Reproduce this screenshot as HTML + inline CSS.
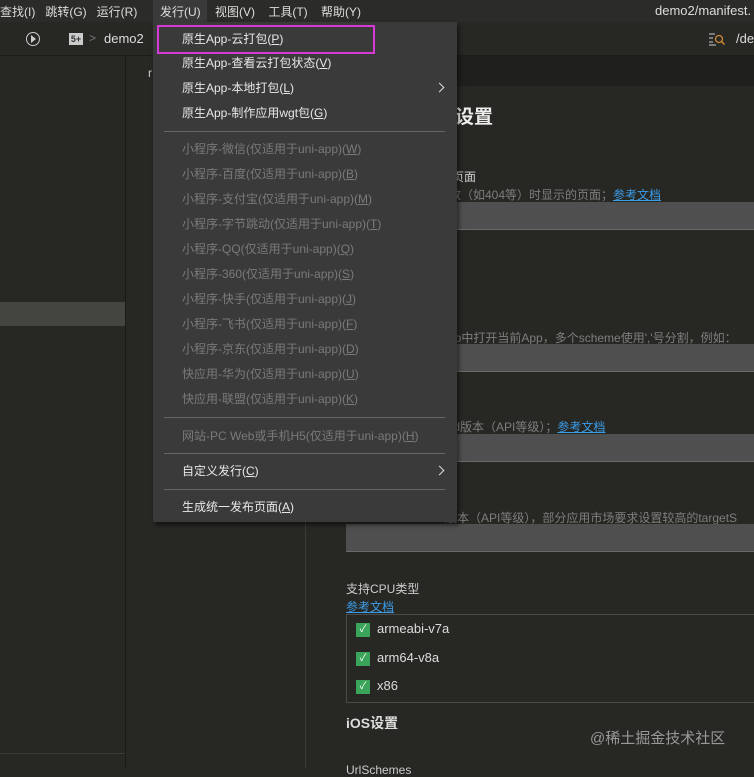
<!DOCTYPE html>
<html><head><meta charset="utf-8"><style>
*{margin:0;padding:0;box-sizing:border-box}
body{width:754px;height:768px;overflow:hidden;background:#272723;font-family:"Liberation Sans","Noto Sans CJK SC",sans-serif;color:#ddd;position:relative;font-size:12px}
.a{position:absolute;white-space:nowrap}
.menu{position:absolute;left:153px;top:22px;width:304px;height:500px;background:#3a3a3a;box-shadow:2px 3px 4px rgba(0,0,0,.5)}
.it{position:absolute;left:29px;font-size:12px;color:#e8e8e8;line-height:14px}
.dis{color:#7a7a7a}
.sep{position:absolute;left:11px;width:281px;height:1px;background:#666}
.inp{position:absolute;left:346px;width:420px;height:28px;background:#4f4f4f;border-bottom:1px solid #6a6a6a}
.gray{color:#7e7e7e}
.lnk{color:#3b9ce8;text-decoration:underline}
.cb{position:absolute;left:356px;width:14px;height:14px;background:#3aa55a;color:#fff;font-size:10px;line-height:14px;text-align:center}
.chev{position:absolute;left:283px;width:7px;height:7px;border-top:1.5px solid #ddd;border-right:1.5px solid #ddd;transform:rotate(45deg)}
</style></head><body>
<div class="a" style="left:0;top:0;width:754px;height:22px;background:#2b2b29"></div>
<div class="a" style="left:0;top:3px;font-size:12px;color:#ddd">查找(I)&nbsp;&nbsp;&nbsp;跳转(G)&nbsp;&nbsp;&nbsp;运行(R)</div>
<div class="a" style="left:153px;top:0;width:54px;height:22px;background:#3a3a3a"></div>
<div class="a" style="left:160px;top:3px;color:#ddd">发行(U)</div>
<div class="a" style="left:215px;top:3px;color:#ddd">视图(V)&nbsp;&nbsp;&nbsp;&nbsp;工具(T)&nbsp;&nbsp;&nbsp;&nbsp;帮助(Y)</div>
<div class="a" style="left:655px;top:3px;font-size:13px;color:#ddd">demo2/manifest.</div>
<div class="a" style="left:0;top:22px;width:754px;height:34px;background:#272723;border-bottom:1px solid #1c1c1a"></div>
<div class="a" style="left:26px;top:32px;width:14px;height:14px;border:1.3px solid #ccc;border-radius:50%"></div>
<div class="a" style="left:31px;top:35px;width:0;height:0;border-left:5px solid #ccc;border-top:4px solid transparent;border-bottom:4px solid transparent"></div>
<div class="a" style="left:69px;top:33px;width:14px;height:12px;background:#ccc;color:#333;font-size:9px;font-weight:bold;line-height:12px;text-align:center">5+</div>
<div class="a" style="left:89px;top:31px;color:#777">&gt;</div>
<div class="a" style="left:104px;top:31px;font-size:13px;color:#ddd">demo2</div>
<svg class="a" style="left:709px;top:32px" width="18" height="14" viewBox="0 0 18 14"><g stroke="#ccc" stroke-width="1"><line x1="0" y1="2" x2="6" y2="2"/><line x1="0" y1="6" x2="4" y2="6"/><line x1="0" y1="10" x2="4" y2="10"/><line x1="0" y1="13" x2="7" y2="13"/></g><circle cx="10" cy="7" r="3.5" fill="none" stroke="#d08a3a" stroke-width="1.3"/><line x1="12.5" y1="9.5" x2="15.5" y2="12.5" stroke="#d08a3a" stroke-width="1.5"/></svg>
<div class="a" style="left:736px;top:31px;font-size:13px;color:#ddd">/de</div>
<div class="a" style="left:457px;top:56px;width:297px;height:30px;background:#1f1f1d"></div>
<div class="a" style="left:125px;top:56px;width:1px;height:712px;background:#1a1a18"></div>
<div class="a" style="left:0;top:302px;width:125px;height:24px;background:#45453f"></div>
<div class="a" style="left:0;top:753px;width:125px;height:1px;background:#3a3a36"></div>
<div class="a" style="left:305px;top:522px;width:1px;height:246px;background:#3c3c38"></div>
<div class="a" style="left:148px;top:66px;color:#ccc">r</div>
<div class="a" style="left:436px;top:102px;font-size:19px;font-weight:bold;color:#eee">置设置</div>
<div class="a" style="left:440px;top:168px;color:#ccc">页页面</div>
<div class="a gray" style="left:437px;top:186px">数数（如404等）时显示的页面；<span class="lnk">参考文档</span></div>
<div class="inp" style="top:202px"></div>
<div class="a gray" style="left:440px;top:329px">App中打开当前App，多个scheme使用','号分割，例如：</div>
<div class="inp" style="top:344px"></div>
<div class="a gray" style="left:440px;top:418px">roid版本（API等级）；<span class="lnk">参考文档</span></div>
<div class="inp" style="top:434px"></div>
<div class="a gray" style="left:445px;top:509px">版本（API等级），部分应用市场要求设置较高的targetS</div>
<div class="inp" style="top:524px"></div>
<div class="a" style="left:346px;top:580px;color:#ccc">支持CPU类型</div>
<div class="a lnk" style="left:346px;top:598px">参考文档</div>
<div class="a" style="left:346px;top:614px;width:420px;height:89px;border:1px solid #4a4a46"></div>
<div class="cb" style="top:623px">✓</div><div class="a" style="left:377px;top:621px;font-size:13px;color:#ddd">armeabi-v7a</div>
<div class="cb" style="top:652px">✓</div><div class="a" style="left:377px;top:650px;font-size:13px;color:#ddd">arm64-v8a</div>
<div class="cb" style="top:680px">✓</div><div class="a" style="left:377px;top:678px;font-size:13px;color:#ddd">x86</div>
<div class="a" style="left:346px;top:713px;font-size:14px;font-weight:bold;color:#ddd">iOS设置</div>
<div class="a" style="left:590px;top:727px;font-size:15px;color:#999">@稀土掘金技术社区</div>
<div class="a" style="left:346px;top:763px;color:#ccc">UrlSchemes</div>
<div class="menu">
<div class="a" style="left:4px;top:3px;width:218px;height:29px;border:2px solid #d63ad6"></div>
<div class="it" style="top:10px">原生App-云打包(<u>P</u>)</div>
<div class="it" style="top:34px">原生App-查看云打包状态(<u>V</u>)</div>
<div class="it" style="top:59px">原生App-本地打包(<u>L</u>)</div>
<div class="chev" style="top:62px"></div>
<div class="it" style="top:84px">原生App-制作应用wgt包(<u>G</u>)</div>
<div class="sep" style="top:109px"></div>
<div class="it dis" style="top:120px">小程序-微信(仅适用于uni-app)(<u>W</u>)</div>
<div class="it dis" style="top:145px">小程序-百度(仅适用于uni-app)(<u>B</u>)</div>
<div class="it dis" style="top:170px">小程序-支付宝(仅适用于uni-app)(<u>M</u>)</div>
<div class="it dis" style="top:195px">小程序-字节跳动(仅适用于uni-app)(<u>T</u>)</div>
<div class="it dis" style="top:220px">小程序-QQ(仅适用于uni-app)(<u>Q</u>)</div>
<div class="it dis" style="top:245px">小程序-360(仅适用于uni-app)(<u>S</u>)</div>
<div class="it dis" style="top:270px">小程序-快手(仅适用于uni-app)(<u>J</u>)</div>
<div class="it dis" style="top:295px">小程序-飞书(仅适用于uni-app)(<u>F</u>)</div>
<div class="it dis" style="top:320px">小程序-京东(仅适用于uni-app)(<u>D</u>)</div>
<div class="it dis" style="top:345px">快应用-华为(仅适用于uni-app)(<u>U</u>)</div>
<div class="it dis" style="top:370px">快应用-联盟(仅适用于uni-app)(<u>K</u>)</div>
<div class="sep" style="top:395px"></div>
<div class="it dis" style="top:407px">网站-PC Web或手机H5(仅适用于uni-app)(<u>H</u>)</div>
<div class="sep" style="top:431px"></div>
<div class="it" style="top:442px">自定义发行(<u>C</u>)</div>
<div class="chev" style="top:445px"></div>
<div class="sep" style="top:467px"></div>
<div class="it" style="top:478px">生成统一发布页面(<u>A</u>)</div>
</div>
</body></html>
